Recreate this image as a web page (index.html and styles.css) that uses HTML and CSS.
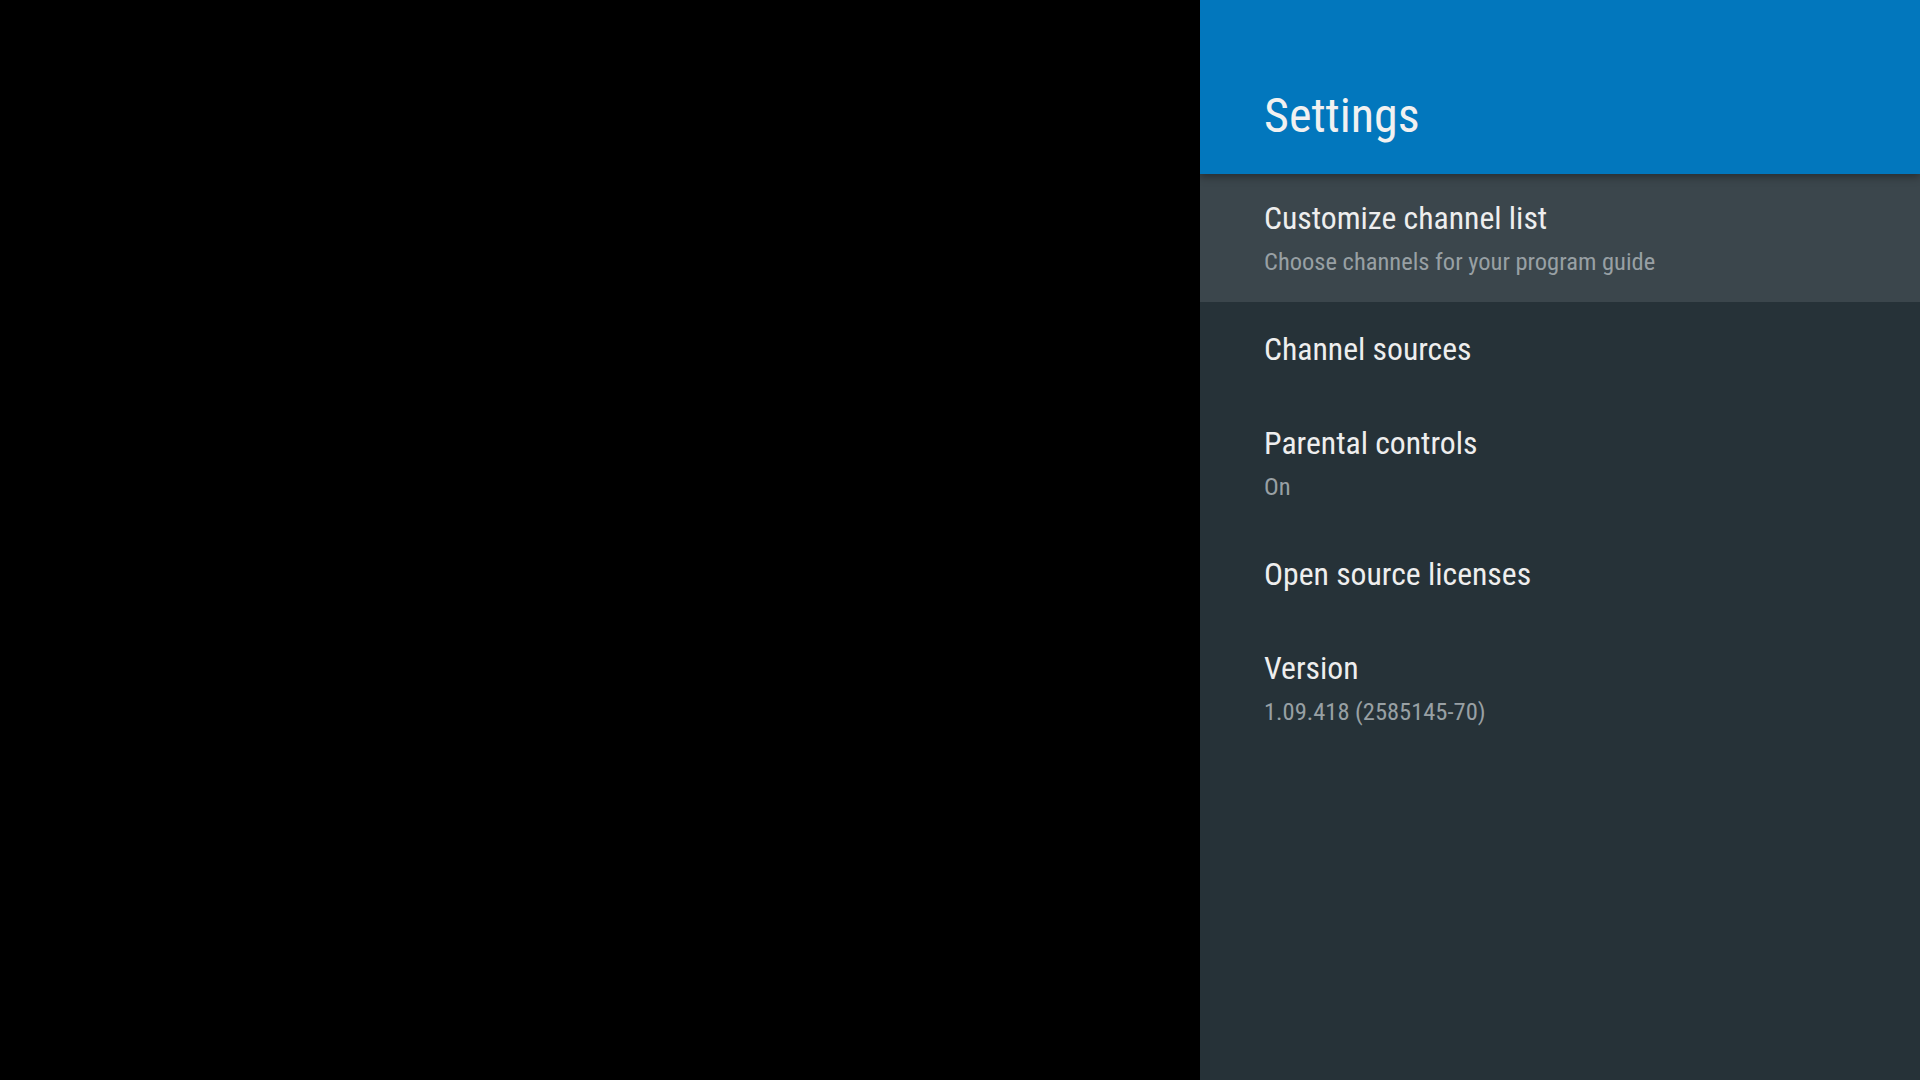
FILE: index.html
```html
<!DOCTYPE html>
<html lang="en">
<head>
<meta charset="utf-8">
<title>Settings</title>
<link rel="stylesheet" href="styles.css">
</head>
<body>
<div class="screen">
  <div class="backdrop"></div>
  <aside class="panel">
    <header class="panel-header">
      <h1 class="panel-title">Settings</h1>
    </header>
    <ul class="menu">
      <li class="menu-item is-focused">
        <div class="item-title">Customize channel list</div>
        <div class="item-desc">Choose channels for your program guide</div>
      </li>
      <li class="menu-item">
        <div class="item-title">Channel sources</div>
      </li>
      <li class="menu-item">
        <div class="item-title">Parental controls</div>
        <div class="item-desc">On</div>
      </li>
      <li class="menu-item">
        <div class="item-title">Open source licenses</div>
      </li>
      <li class="menu-item">
        <div class="item-title">Version</div>
        <div class="item-desc">1.09.418 (2585145-70)</div>
      </li>
    </ul>
  </aside>
</div>
</body>
</html>
```
FILE: styles.css
```css
* { box-sizing: border-box; }
html, body { margin: 0; padding: 0; height: 100%; background: #000; }
body {
  font-family: "Roboto Condensed", Roboto, "Liberation Sans Narrow", sans-serif;
  font-stretch: condensed;
}
.screen {
  display: flex;
  width: 1920px;
  height: 1080px;
}
.backdrop {
  flex: 0 0 1200px;
  background: #000;
}
.panel {
  flex: 0 0 720px;
  background: #263238;
  display: flex;
  flex-direction: column;
}
.panel-header {
  height: 174px;
  background: #0277bd;
  padding: 0 0 0 64px;
  position: relative;
  z-index: 1;
  box-shadow: 0 3px 8px rgba(0, 0, 0, 0.35);
}
.panel-title {
  margin: 0;
  padding-top: 88px;
  font-size: 48px;
  line-height: 56px;
  font-weight: 400;
  color: #f1f1f1;
}
.menu {
  list-style: none;
  margin: 0;
  padding: 0;
}
.menu-item {
  padding: 26px 64px 24px;
}
.menu-item.is-focused {
  background: #3b464c;
  padding: 23px 64px 24px;
}
.item-title {
  font-size: 31.7px;
  line-height: 44px;
  color: #eeeeee;
}
.item-desc {
  margin-top: 5px;
  font-size: 24.5px;
  line-height: 32px;
  color: #98a0a4;
}
```
